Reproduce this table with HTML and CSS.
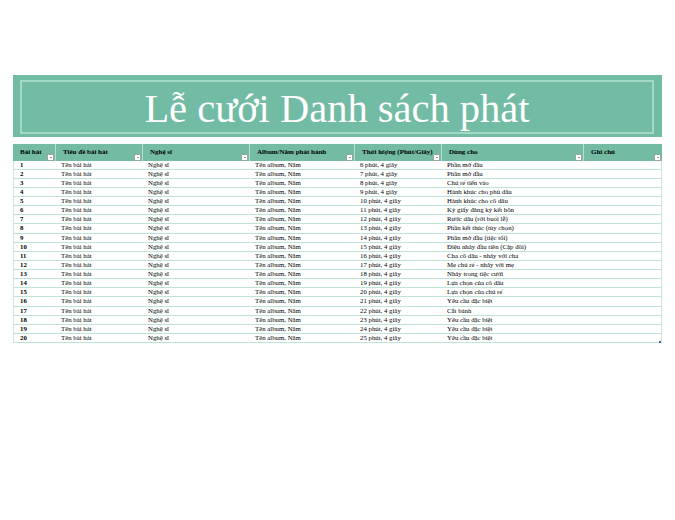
FILE: index.html
```html
<!DOCTYPE html>
<html lang="vi">
<head>
<meta charset="utf-8">
<link rel="stylesheet" href="styles.css">
</head>
<body>
<div class="sheet">
  <div class="banner"><div class="banner-inner"><h1 class="title">Lễ cưới Danh sách phát</h1></div></div>
  <div class="table">
    <div class="row head">
      <div class="cell">Bài hát<span class="dd"></span></div>
      <div class="cell">Tiêu đề bài hát<span class="dd"></span></div>
      <div class="cell">Nghệ sĩ<span class="dd"></span></div>
      <div class="cell">Album/Năm phát hành<span class="dd"></span></div>
      <div class="cell">Thời lượng (Phút/Giây)<span class="dd"></span></div>
      <div class="cell">Dùng cho<span class="dd"></span></div>
      <div class="cell">Ghi chú<span class="dd"></span></div>
    </div>
    <div class="row"><div class="cell num">1</div><div class="cell">Tên bài hát</div><div class="cell">Nghệ sĩ</div><div class="cell">Tên album, Năm</div><div class="cell">6 phút, 4 giây</div><div class="cell">Phần mở đầu</div><div class="cell"></div></div>
    <div class="row"><div class="cell num">2</div><div class="cell">Tên bài hát</div><div class="cell">Nghệ sĩ</div><div class="cell">Tên album, Năm</div><div class="cell">7 phút, 4 giây</div><div class="cell">Phần mở đầu</div><div class="cell"></div></div>
    <div class="row"><div class="cell num">3</div><div class="cell">Tên bài hát</div><div class="cell">Nghệ sĩ</div><div class="cell">Tên album, Năm</div><div class="cell">8 phút, 4 giây</div><div class="cell">Chú rể tiến vào</div><div class="cell"></div></div>
    <div class="row"><div class="cell num">4</div><div class="cell">Tên bài hát</div><div class="cell">Nghệ sĩ</div><div class="cell">Tên album, Năm</div><div class="cell">9 phút, 4 giây</div><div class="cell">Hành khúc cho phù dâu</div><div class="cell"></div></div>
    <div class="row"><div class="cell num">5</div><div class="cell">Tên bài hát</div><div class="cell">Nghệ sĩ</div><div class="cell">Tên album, Năm</div><div class="cell">10 phút, 4 giây</div><div class="cell">Hành khúc cho cô dâu</div><div class="cell"></div></div>
    <div class="row"><div class="cell num">6</div><div class="cell">Tên bài hát</div><div class="cell">Nghệ sĩ</div><div class="cell">Tên album, Năm</div><div class="cell">11 phút, 4 giây</div><div class="cell">Ký giấy đăng ký kết hôn</div><div class="cell"></div></div>
    <div class="row"><div class="cell num">7</div><div class="cell">Tên bài hát</div><div class="cell">Nghệ sĩ</div><div class="cell">Tên album, Năm</div><div class="cell">12 phút, 4 giây</div><div class="cell">Rước dâu (rời buổi lễ)</div><div class="cell"></div></div>
    <div class="row"><div class="cell num">8</div><div class="cell">Tên bài hát</div><div class="cell">Nghệ sĩ</div><div class="cell">Tên album, Năm</div><div class="cell">13 phút, 4 giây</div><div class="cell">Phần kết thúc (tùy chọn)</div><div class="cell"></div></div>
    <div class="row"><div class="cell num">9</div><div class="cell">Tên bài hát</div><div class="cell">Nghệ sĩ</div><div class="cell">Tên album, Năm</div><div class="cell">14 phút, 4 giây</div><div class="cell">Phần mở đầu (tiệc tối)</div><div class="cell"></div></div>
    <div class="row"><div class="cell num">10</div><div class="cell">Tên bài hát</div><div class="cell">Nghệ sĩ</div><div class="cell">Tên album, Năm</div><div class="cell">15 phút, 4 giây</div><div class="cell">Điệu nhảy đầu tiên (Cặp đôi)</div><div class="cell"></div></div>
    <div class="row"><div class="cell num">11</div><div class="cell">Tên bài hát</div><div class="cell">Nghệ sĩ</div><div class="cell">Tên album, Năm</div><div class="cell">16 phút, 4 giây</div><div class="cell">Cha cô dâu - nhảy với cha</div><div class="cell"></div></div>
    <div class="row"><div class="cell num">12</div><div class="cell">Tên bài hát</div><div class="cell">Nghệ sĩ</div><div class="cell">Tên album, Năm</div><div class="cell">17 phút, 4 giây</div><div class="cell">Mẹ chú rể - nhảy với mẹ</div><div class="cell"></div></div>
    <div class="row"><div class="cell num">13</div><div class="cell">Tên bài hát</div><div class="cell">Nghệ sĩ</div><div class="cell">Tên album, Năm</div><div class="cell">18 phút, 4 giây</div><div class="cell">Nhảy trong tiệc cưới</div><div class="cell"></div></div>
    <div class="row"><div class="cell num">14</div><div class="cell">Tên bài hát</div><div class="cell">Nghệ sĩ</div><div class="cell">Tên album, Năm</div><div class="cell">19 phút, 4 giây</div><div class="cell">Lựa chọn của cô dâu</div><div class="cell"></div></div>
    <div class="row"><div class="cell num">15</div><div class="cell">Tên bài hát</div><div class="cell">Nghệ sĩ</div><div class="cell">Tên album, Năm</div><div class="cell">20 phút, 4 giây</div><div class="cell">Lựa chọn của chú rể</div><div class="cell"></div></div>
    <div class="row"><div class="cell num">16</div><div class="cell">Tên bài hát</div><div class="cell">Nghệ sĩ</div><div class="cell">Tên album, Năm</div><div class="cell">21 phút, 4 giây</div><div class="cell">Yêu cầu đặc biệt</div><div class="cell"></div></div>
    <div class="row"><div class="cell num">17</div><div class="cell">Tên bài hát</div><div class="cell">Nghệ sĩ</div><div class="cell">Tên album, Năm</div><div class="cell">22 phút, 4 giây</div><div class="cell">Cắt bánh</div><div class="cell"></div></div>
    <div class="row"><div class="cell num">18</div><div class="cell">Tên bài hát</div><div class="cell">Nghệ sĩ</div><div class="cell">Tên album, Năm</div><div class="cell">23 phút, 4 giây</div><div class="cell">Yêu cầu đặc biệt</div><div class="cell"></div></div>
    <div class="row"><div class="cell num">19</div><div class="cell">Tên bài hát</div><div class="cell">Nghệ sĩ</div><div class="cell">Tên album, Năm</div><div class="cell">24 phút, 4 giây</div><div class="cell">Yêu cầu đặc biệt</div><div class="cell"></div></div>
    <div class="row last"><div class="cell num">20</div><div class="cell">Tên bài hát</div><div class="cell">Nghệ sĩ</div><div class="cell">Tên album, Năm</div><div class="cell">25 phút, 4 giây</div><div class="cell">Yêu cầu đặc biệt</div><div class="cell"></div><span class="handle"></span></div>
  </div>
</div>
</body>
</html>
```

FILE: styles.css
```css
html, body {
  margin: 0;
  padding: 0;
  background: #ffffff;
}
body {
  font-family: "Liberation Serif", "Times New Roman", serif;
  color: #000;
}
.sheet {
  width: 649px;
  padding: 75px 0 0 13px;
}
.banner {
  height: 62px;
  background: #72bba4;
  padding: 5px 8px 3px 7px;
  box-sizing: border-box;
}
.banner-inner {
  height: 100%;
  border: 2px solid #a3d8c5;
  box-sizing: border-box;
  display: flex;
  align-items: center;
  justify-content: center;
}
.title {
  margin: 0;
  font-weight: normal;
  font-size: 40.5px;
  line-height: 1;
  color: #ffffff;
  padding-top: 4px;
}
.table {
  margin-top: 7px;
  border-left: 1px solid #c6e7dc;
  border-right: 1px solid #c6e7dc;
  width: 649px;
  box-sizing: border-box;
}
.row {
  display: grid;
  grid-template-columns: 41px 87px 107px 105px 87px 142px 78px;
  height: 9.13px;
  box-sizing: border-box;
  border-bottom: 1px solid #bfe4d7;
  font-size: 6.8px;
  line-height: 8px;
  position: relative;
}
.row.head {
  height: 16.5px;
  background: #73bba3;
  border-bottom: none;
  font-weight: bold;
  font-size: 7px;
  margin-left: -1px;
  margin-right: -1px;
  grid-template-columns: 42px 87px 107px 105px 87px 142px 79px;
}
.cell {
  padding-left: 6px;
  white-space: nowrap;
  overflow: hidden;
  position: relative;
}
.head .cell {
  padding-top: 4px;
  padding-left: 7px;
  border-left: 1px solid #b2dfcf;
}
.head .cell:first-child {
  border-left: none;
}
.num {
  font-weight: bold;
}
.dd {
  position: absolute;
  right: 1px;
  bottom: 0;
  width: 7px;
  height: 7px;
  box-sizing: border-box;
  background: #ffffff;
  border: 1px solid #9aa6a2;
}
.dd::after {
  content: "";
  position: absolute;
  left: 1.5px;
  top: 2px;
  border-left: 1.5px solid transparent;
  border-right: 1.5px solid transparent;
  border-top: 1.5px solid #333;
}
.handle {
  position: absolute;
  right: 0;
  bottom: -1px;
  width: 2px;
  height: 2px;
  background: #3e62b0;
}
```
